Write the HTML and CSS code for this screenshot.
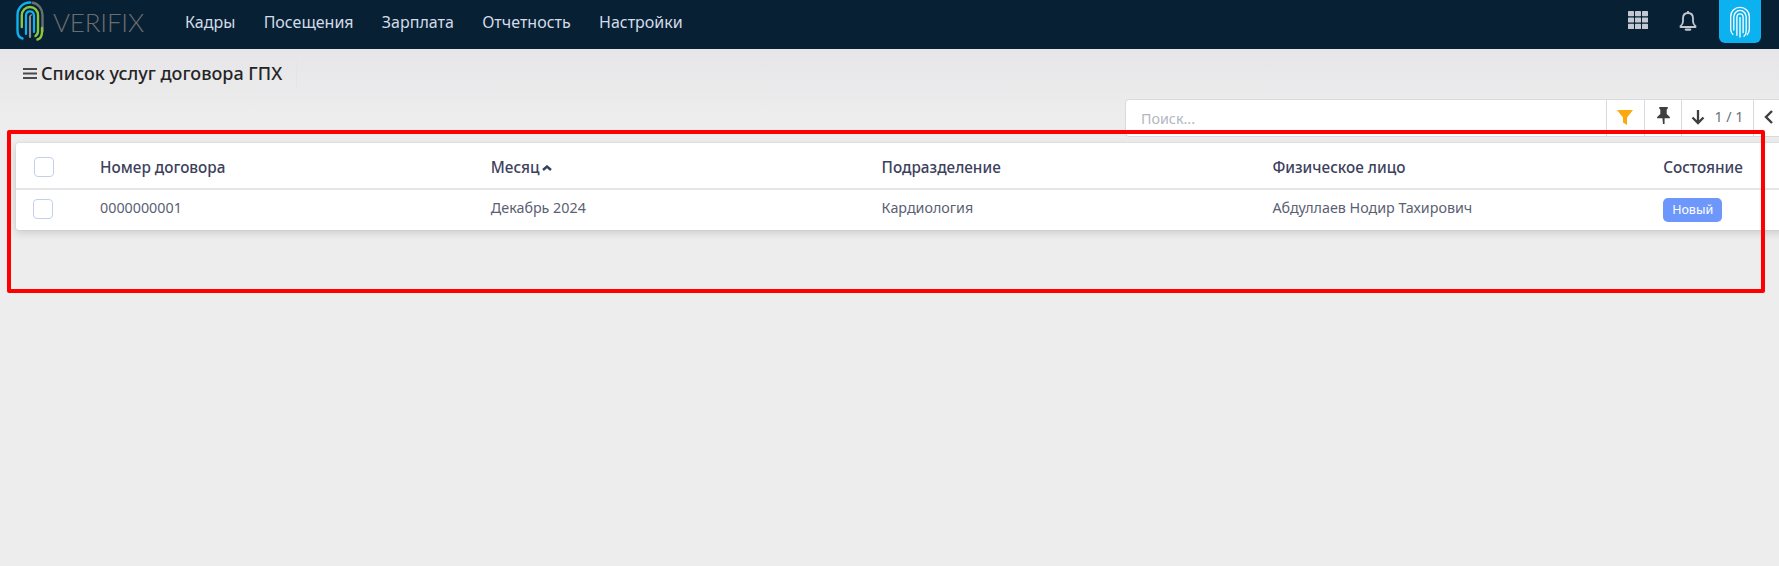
FILE: index.html
```html
<!DOCTYPE html>
<html lang="ru">
<head>
<meta charset="utf-8">
<title>Список услуг договора ГПХ</title>
<link rel="stylesheet" href="styles.css">
</head>
<body>
<header class="navbar">
  <a class="brand">
    <svg class="brand-mark" viewBox="0 0 28 40" fill="none" stroke-linecap="round">
      <path d="M6.5 37.5C3 36.5 1.5 33.5 1.5 30V14C1.5 7 7 1.5 14 1.5" stroke="#0fb2ee" stroke-width="2.4"/>
      <path d="M16.5 1.8C22.5 2.8 26.5 8 26.5 14V30" stroke="#6b6f72" stroke-width="2.4"/>
      <path d="M21.5 38.5C24.5 37.5 26 35 26 31V27" stroke="#8cc63f" stroke-width="2.4"/>
      <path d="M5.8 26V14.5C5.8 9.5 9.5 6 14 6C18.5 6 22 9.5 22 14.5V30C22 32.5 21 34 19.5 35" stroke="#8cc63f" stroke-width="2.4"/>
      <path d="M10 33V15C10 12 11.7 10.3 14 10.3C16.3 10.3 18 12 18 15V31" stroke="#0fb2ee" stroke-width="2.2"/>
      <path d="M14 36V16" stroke="#8a8e91" stroke-width="2.2"/>
      <path d="M14 15.5C14 14.5 15 14 15.5 14" stroke="#8a8e91" stroke-width="1.6"/>
    </svg>
    <span class="brand-name">VERIFIX</span>
  </a>
  <nav class="menu">
    <a>Кадры</a>
    <a>Посещения</a>
    <a>Зарплата</a>
    <a>Отчетность</a>
    <a>Настройки</a>
  </nav>
  <div class="systray">
    <svg class="tray-grid" viewBox="0 0 20 18" fill="#c3c8d2">
      <rect x="0" y="0" width="6" height="5.2" rx=".6"/><rect x="7" y="0" width="6" height="5.2" rx=".6"/><rect x="14" y="0" width="6" height="5.2" rx=".6"/>
      <rect x="0" y="6.4" width="6" height="5.2" rx=".6"/><rect x="7" y="6.4" width="6" height="5.2" rx=".6"/><rect x="14" y="6.4" width="6" height="5.2" rx=".6"/>
      <rect x="0" y="12.8" width="6" height="5.2" rx=".6"/><rect x="7" y="12.8" width="6" height="5.2" rx=".6"/><rect x="14" y="12.8" width="6" height="5.2" rx=".6"/>
    </svg>
    <svg class="tray-bell" viewBox="0 0 18 21" fill="none" stroke="#c3c8d2" stroke-width="1.8">
      <path d="M9 1V3M9 3C5.6 3 4 5.6 4 8.4V11.5C4 13.5 2.8 15 1.5 16.2V17H16.5V16.2C15.2 15 14 13.5 14 11.5V8.4C14 5.6 12.4 3 9 3Z" stroke-linejoin="round"/>
      <path d="M6.8 19.6H11.2" stroke-width="2.2" stroke-linecap="round"/>
    </svg>
    <div class="avatar">
      <svg viewBox="0 0 24 36" fill="none" stroke="#fff" stroke-width="1.5" stroke-linecap="round">
        <path d="M4 32C2 30.500 1.500 29 1.500 26V12C1.500 6 6 1.500 12 1.500C18 1.500 22.500 6 22.500 12V26C22.500 29 22 30.500 20 32.500"/>
        <path d="M5 27V12.500C5 8.500 8 5 12 5C16 5 19 8.500 19 12.500V28C19 30.500 18 32.500 16.500 34"/>
        <path d="M8.500 33V13C8.500 10.500 10 8.800 12 8.800C14 8.800 15.500 10.500 15.500 13V30"/>
        <path d="M12 35V13"/>
      </svg>
    </div>
  </div>
</header>

<main class="content">
  <div class="breadcrumb">
    <svg class="burger" viewBox="0 0 14 11" fill="#4a4a4a"><rect width="14" height="2"/><rect y="4.500" width="14" height="2"/><rect y="9" width="14" height="2"/></svg>
    <h1 class="page-title">Список услуг договора ГПХ</h1>
  </div>

  <div class="toolbar">
    <div class="search">
      <div class="search-input">Поиск...</div>
      <button class="tool tool-filter">
        <svg viewBox="0 0 16 16" fill="#fba90e"><path d="M0 1H16L10 8.500V16L6 13.500V8.500Z"/></svg>
      </button>
      <button class="tool tool-pin">
        <svg viewBox="0 0 14 16" fill="#3f3f3f"><path d="M3 0H11V1.500L10 2.500V6.500L13 9.500V10.500H8V16H6.500L6 10.500H1V9.500L4 6.500V2.500L3 1.500Z"/></svg>
      </button>
      <button class="tool tool-pager">
        <svg viewBox="0 0 14 16" fill="none" stroke="#3f3f3f" stroke-width="2.300"><path d="M7 1V14M1.500 8.500L7 14L12.500 8.500"/></svg>
        <span>1 / 1</span>
      </button>
      <button class="tool tool-prev">
        <svg viewBox="0 0 10 16" fill="none" stroke="#3f3f3f" stroke-width="2.400"><path d="M8 2L2 8L8 14"/></svg>
      </button>
    </div>
  </div>

  <section class="card">
    <table class="list">
      <colgroup><col class="col-check"><col class="col-data"><col class="col-data"><col class="col-data"><col class="col-data"><col class="col-data"></colgroup>
      <thead>
        <tr>
          <th><span class="check check-head"></span></th>
          <th>Номер договора</th>
          <th>Месяц<svg class="sort" viewBox="0 0 10 6" fill="none" stroke="#3a3f5c" stroke-width="2.400"><path d="M1 5L5 1.500L9 5"/></svg></th>
          <th>Подразделение</th>
          <th>Физическое лицо</th>
          <th>Состояние</th>
        </tr>
      </thead>
      <tbody>
        <tr>
          <td class="cell-check"><span class="check"></span></td>
          <td>0000000001</td>
          <td>Декабрь 2024</td>
          <td>Кардиология</td>
          <td>Абдуллаев Нодир Тахирович</td>
          <td class="cell-badge"><span class="badge">Новый</span></td>
        </tr>
      </tbody>
    </table>
  </section>

  <div class="highlight"></div>
</main>
</body>
</html>
```
FILE: styles.css
```css
* { box-sizing: border-box; }

html, body {
  margin: 0;
  height: 100%;
  overflow: hidden;
}

body {
  background: #ededed;
  font-family: "Noto Sans", "Open Sans", sans-serif;
  font-size: 14.300px;
  color: #4a4f68;
}

.navbar {
  display: flex;
  align-items: center;
  height: 49px;
  background: #072033;
  padding-left: 16px;
}

.brand {
  display: flex;
  align-items: center;
  width: 169px;
}

.brand-mark {
  width: 28px;
  height: 40px;
  margin-top: -7px;
}

.brand-name {
  margin: -5px 0 0 9px;
  font-family: "Lato", sans-serif;
  font-weight: 300;
  font-size: 26px;
  letter-spacing: -.2px;
  color: #6a6d70;
}

.menu {
  display: flex;
  gap: 28.300px;
  margin-top: -5px;
  font-size: 16px;
  color: #d3dbe8;
}

.systray {
  display: flex;
  align-items: center;
  margin-left: auto;
  margin-right: 18px;
}

.tray-grid {
  width: 20px;
  height: 18px;
  margin-top: -9px;
}

.tray-bell {
  width: 18px;
  height: 21px;
  margin: -9px 22px 0 31px;
}

.avatar {
  display: flex;
  align-items: center;
  justify-content: center;
  width: 42px;
  height: 43px;
  margin-top: -6px;
  background: #0cb2ef;
  border-radius: 0 0 6px 6px;
}

.avatar svg {
  width: 22px;
  height: 32px;
}

.content {
  position: relative;
  height: calc(100% - 49px);
  background: linear-gradient(#e6e6e9, #ededed 70px);
  padding-top: 12px;
}

.breadcrumb {
  display: flex;
  align-items: center;
  width: 274px;
  height: 28px;
  margin-left: 23px;
  padding-bottom: 4px;
  border-right: 1px solid #e4e4e6;
}

.burger {
  width: 14px;
  height: 11px;
}

.page-title {
  margin: 0 0 0 4px;
  font-size: 18px;
  font-weight: 500;
  color: #252525;
}

.toolbar {
  display: flex;
  margin-top: 10px;
  padding-left: 1125px;
}

.search {
  display: flex;
  flex: none;
  height: 38px;
  background: #fff;
  border: 1px solid #d8dadd;
  border-radius: 4px 0 0 4px;
}

.search-input {
  width: 480px;
  padding: 9px 15px;
  color: #b3b6c0;
}

.tool {
  display: flex;
  flex: none;
  align-items: center;
  justify-content: center;
  gap: 9px;
  padding: 0;
  background: #fff;
  border: 0;
  border-left: 1px solid #d8dadd;
  font: inherit;
  color: #6b6f80;
}

.tool-filter { width: 38px; padding-right: 2px; }
.tool-filter svg { width: 16px; height: 16px; margin-top: -3px; }
.tool-pin { width: 37px; }
.tool-pin svg { width: 15px; height: 17px; margin-top: -5px; }
.tool-pager { width: 72px; }
.tool-pager svg { width: 14px; height: 16px; margin-top: -2px; }
.tool-pager span { margin-top: -3px; }
.tool-prev { width: 40px; justify-content: flex-start; padding-left: 10px; }
.tool-prev svg { width: 10px; height: 16px; margin-top: -2px; }

.card {
  width: 1900px;
  margin: 6px 0 0 16px;
  background: #fff;
  border-radius: 3px;
  box-shadow: 0 3px 8px rgba(0, 0, 0, .14), 0 0 0 1px #e6e6e6;
  overflow: hidden;
}

.list {
  border-collapse: collapse;
  table-layout: fixed;
  width: 2038px;
}

.col-check { width: 84px; }
.col-data { width: 390.500px; }

.list th,
.list td {
  text-align: left;
  vertical-align: middle;
  white-space: nowrap;
}

.list th {
  height: 46px;
  padding: 2px 0 0;
  border-bottom: 2px solid #e6e6e9;
  font-size: 15.300px;
  font-weight: 500;
  color: #3d415c;
}

.list td {
  height: 41px;
  padding: 0 0 5px;
  color: #5b5f73;
}

.list .cell-check { padding-bottom: 2px; }
.list .cell-badge { padding-bottom: 0; }

.sort {
  width: 10px;
  height: 6px;
  margin-left: 3px;
  vertical-align: 2px;
}

.check {
  display: block;
  width: 20px;
  height: 20px;
  margin-left: 17px;
  background: #fff;
  border: 1px solid #c4d0ea;
  border-radius: 4px;
}

.check-head {
  margin-left: 18px;
}

.badge {
  display: inline-block;
  width: 59px;
  height: 24px;
  background: #6e97fb;
  border-radius: 5px;
  font-size: 12.500px;
  line-height: 24px;
  text-align: center;
  color: #fff;
}

.highlight {
  position: absolute;
  top: 81px;
  left: 7px;
  width: 1758px;
  height: 163px;
  border: 4px solid #fe0000;
  border-radius: 2px;
  pointer-events: none;
}
```
